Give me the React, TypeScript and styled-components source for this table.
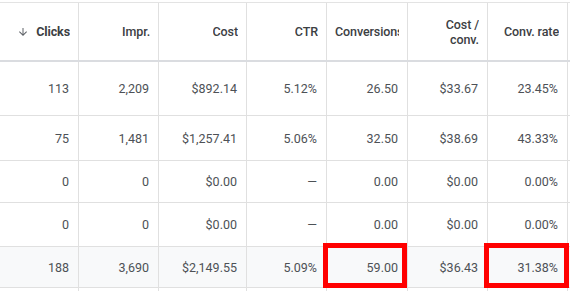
import React from "react";
import styled, { createGlobalStyle } from "styled-components";

const columns = "79px 80px 88px 80px 81px 80px 80px 1fr";

const headers = ["Clicks", "Impr.", "Cost", "CTR", "Conversions", "Cost /\nconv.", "Conv. rate", ""];

const rows = [
  { h: 53, cells: ["113", "2,209", "$892.14", "5.12%", "26.50", "$33.67", "23.45%", ""] },
  { h: 44, cells: ["75", "1,481", "$1,257.41", "5.06%", "32.50", "$38.69", "43.33%", ""] },
  { h: 41, cells: ["0", "0", "$0.00", "—", "0.00", "$0.00", "0.00%", ""] },
  { h: 43, cells: ["0", "0", "$0.00", "—", "0.00", "$0.00", "0.00%", ""] },
];

const total = ["188", "3,690", "$2,149.55", "5.09%", "59.00", "$36.43", "31.38%", ""];
const flagged = [4, 6];

export default () => (
  <>
    <GlobalStyle />
    <Page>
      <Row $h={57} $header>
        {headers.map((label, i) => (
          <HeadCell key={i} $tight={i === 4}>
            {i === 0 && (
              <SortIcon viewBox="0 0 24 24">
                <path d="M20 12l-1.41-1.41L13 16.17V4h-2v12.17l-5.58-5.59L4 12l8 8 8-8z" />
              </SortIcon>
            )}
            <HeadLabel $sorted={i === 0}>{label}</HeadLabel>
          </HeadCell>
        ))}
      </Row>
      {rows.map((row, r) => (
        <Row key={r} $h={row.h}>
          {row.cells.map((value, i) => (
            <Cell key={i}>{value}</Cell>
          ))}
        </Row>
      ))}
      <Row $h={40} $total>
        {total.map((value, i) => (
          <Cell key={i} $flagged={flagged.includes(i)} $wide={i === 6}>
            {value}
          </Cell>
        ))}
      </Row>
      <Row $h={10}>
        {total.map((_, i) => (
          <Cell key={i} />
        ))}
      </Row>
    </Page>
  </>
);

const GlobalStyle = createGlobalStyle`
  body {
    margin: 0;
    background: #fff;
    font-family: Roboto, "Liberation Sans", Arial, sans-serif;
  }
`;

const Page = styled.div`
  width: 570px;
  height: 291px;
  overflow: hidden;
  padding-top: 2px;
  box-sizing: border-box;
`;

const Row = styled.div<{ $h: number; $header?: boolean; $total?: boolean }>`
  display: grid;
  grid-template-columns: ${columns};
  height: ${({ $h }) => $h}px;
  box-sizing: content-box;
  background: ${({ $total }) => ($total ? "#f8f9fa" : "#fff")};
  border-top: ${({ $header }) => ($header ? "1px solid #e3e3e3" : "none")};
  border-bottom: ${({ $header }) => ($header ? "2px solid #dadce0" : "1px solid #e0e0e0")};
`;

const Cell = styled.div<{ $flagged?: boolean; $wide?: boolean }>`
  position: relative;
  display: flex;
  align-items: center;
  justify-content: flex-end;
  padding: 0 9px 0 8px;
  border-right: 1px solid #e0e0e0;
  font-size: 12.5px;
  color: #4d5156;
  white-space: nowrap;

  ${({ $flagged, $wide }) =>
    $flagged &&
    `
    &::after {
      content: "";
      position: absolute;
      top: -4px;
      bottom: -1px;
      left: -4px;
      right: ${$wide ? "-2px" : "0"};
      border: 5px solid #ff0000;
    }
  `}
`;

const HeadCell = styled.div<{ $tight?: boolean }>`
  display: flex;
  align-items: center;
  justify-content: flex-end;
  gap: 7px;
  padding: 0 ${({ $tight }) => ($tight ? "8px" : "8px")} 0 8px;
  border-right: 1px solid #e0e0e0;
  min-width: 0;
`;

const HeadLabel = styled.div<{ $sorted: boolean }>`
  overflow: hidden;
  white-space: pre;
  text-align: right;
  font-size: 12.5px;
  line-height: 15px;
  letter-spacing: -0.1px;
  font-weight: ${({ $sorted }) => ($sorted ? 700 : 500)};
  color: #3c4043;
`;

const SortIcon = styled.svg`
  width: 12px;
  height: 12px;
  flex: none;
  fill: #5f6368;
`;
